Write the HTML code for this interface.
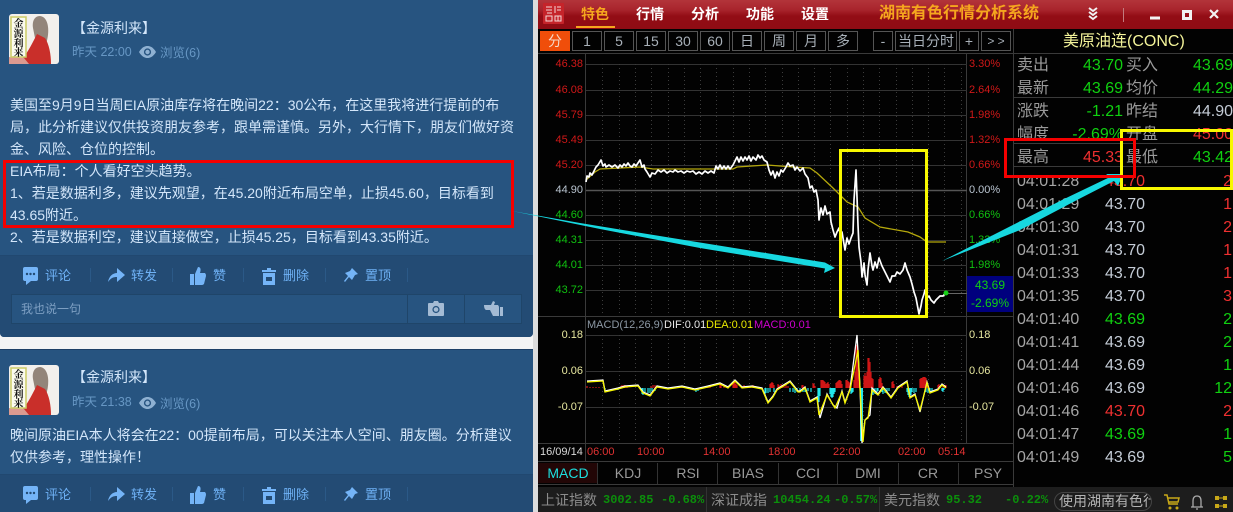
<!DOCTYPE html>
<html><head><meta charset="utf-8"><style>
html,body{margin:0;padding:0;background:#fff}
#r{position:relative;width:1233px;height:512px;overflow:hidden;background:#f4f4f4;font-family:"Liberation Sans","Noto Sans CJK SC",sans-serif}
#r div,#r span.a{position:absolute;white-space:nowrap}
.t{color:#d3e6fa;font-size:14px;line-height:22px;left:10px}
.n{color:#d3e6fa;font-size:14px;line-height:20px;left:72px}
.m{color:#6797c4;font-size:12.500px;line-height:18px}
.ac{color:#6fb2f6;font-size:13px;line-height:20px}
.dv{width:1px;height:14px;background:#2b5987}
.b{box-sizing:border-box;border:1px solid #555;height:20px;top:31px;color:#a8b0b8;font-size:14px;line-height:18px;text-align:center}
.pl{left:538px;width:45px;text-align:right;font-size:11px;line-height:14px}
.pr{left:969px;font-size:11px;line-height:14px}
.mn{color:#fff;font-size:14px;font-weight:bold;line-height:20px;top:4px}
.l{left:1017px;color:#9a9a9a;font-size:16px;line-height:22px}
.l2{left:1126px;color:#9a9a9a;font-size:16px;line-height:22px}
.v{left:1053px;width:70px;text-align:right;font-size:16px;line-height:22px}
.v2{left:1163px;width:70px;text-align:right;font-size:16px;line-height:22px}
.tt{left:1017px;color:#a5a5a5;font-size:16px;line-height:22px}
.tp{left:1105px;font-size:16px;line-height:22px}
.tq{left:1183px;width:49px;text-align:right;font-size:16px;line-height:22px}
.tab{top:463px;height:20px;width:60px;text-align:center;color:#999;font-size:14px;line-height:20px}
.tm{top:441px;color:#e23232;font-size:11px;line-height:22px}
.bl{top:490px;color:#8c8c8c;font-size:14px;line-height:20px}
.bg{top:491px;color:#0b8f0b;font:bold 12px/18px "Liberation Mono",monospace}
.g{color:#10d010}.rd{color:#ef3030}.w{color:#c4ccd6}
</style></head><body><div id="r">

<!-- left cards -->
<div style="left:0;top:0;width:533px;height:337px;background:#275480;border-radius:0 0 4px 4px"></div>
<div style="left:0;top:255px;width:533px;height:82px;background:#234b74;border-top:1px solid #214870;box-sizing:border-box;border-radius:0 0 4px 4px"></div>
<div style="left:0;top:349px;width:533px;height:163px;background:#275480;border-top:1px solid #1e4066;box-sizing:border-box"></div>
<div style="left:0;top:474px;width:533px;height:38px;background:#234b74;border-top:1px solid #214870;box-sizing:border-box"></div>

<svg style="position:absolute;left:9px;top:14px" width="50" height="50" viewBox="0 0 50 50"><rect width="50" height="50" rx="3" fill="#f3f0ec"/><path d="M31 2C25 2 23 8 24 14L26 24 37 30C41 18 40 3 31 2Z" fill="#93857a"/><path d="M28 20C24 28 19 38 14 44L0 44V50H42C42 40 40 30 36 24Z" fill="#c92f2a"/><path d="M0 43 15 44 20 50H0Z" fill="#dc9a90"/><rect x="2" y="3" width="15" height="40" fill="#fbfbee" stroke="#cccc66" stroke-width="1.500"/><text x="9.500" y="13" text-anchor="middle" font-size="10" font-weight="bold" fill="#111" font-family="'Noto Serif CJK SC',serif">金</text><text x="9.500" y="23" text-anchor="middle" font-size="10" font-weight="bold" fill="#111" font-family="'Noto Serif CJK SC',serif">源</text><text x="9.500" y="33" text-anchor="middle" font-size="10" font-weight="bold" fill="#111" font-family="'Noto Serif CJK SC',serif">利</text><text x="9.500" y="42" text-anchor="middle" font-size="10" font-weight="bold" fill="#111" font-family="'Noto Serif CJK SC',serif">来</text></svg>
<svg style="position:absolute;left:9px;top:365px" width="50" height="50" viewBox="0 0 50 50"><rect width="50" height="50" rx="3" fill="#f3f0ec"/><path d="M31 2C25 2 23 8 24 14L26 24 37 30C41 18 40 3 31 2Z" fill="#93857a"/><path d="M28 20C24 28 19 38 14 44L0 44V50H42C42 40 40 30 36 24Z" fill="#c92f2a"/><path d="M0 43 15 44 20 50H0Z" fill="#dc9a90"/><rect x="2" y="3" width="15" height="40" fill="#fbfbee" stroke="#cccc66" stroke-width="1.500"/><text x="9.500" y="13" text-anchor="middle" font-size="10" font-weight="bold" fill="#111" font-family="'Noto Serif CJK SC',serif">金</text><text x="9.500" y="23" text-anchor="middle" font-size="10" font-weight="bold" fill="#111" font-family="'Noto Serif CJK SC',serif">源</text><text x="9.500" y="33" text-anchor="middle" font-size="10" font-weight="bold" fill="#111" font-family="'Noto Serif CJK SC',serif">利</text><text x="9.500" y="42" text-anchor="middle" font-size="10" font-weight="bold" fill="#111" font-family="'Noto Serif CJK SC',serif">来</text></svg>

<div class="n" style="top:18px">【金源利来】</div>
<div class="m" style="left:72px;top:43px">昨天 22:00</div>
<svg style="position:absolute;left:139px;top:46px" width="17" height="12" viewBox="0 0 17 12"><path d="M0 6C3 1 6 0 8.500 0S14 1 17 6C14 11 11 12 8.500 12S3 11 0 6Z" fill="#8fb1d2"/><circle cx="8.500" cy="6" r="3.600" fill="#275480"/><circle cx="8.500" cy="6" r="2.200" fill="#8fb1d2"/></svg>
<div class="m" style="left:160px;top:44px">浏览(6)</div>

<div class="n" style="top:367px">【金源利来】</div>
<div class="m" style="left:72px;top:393px">昨天 21:38</div>
<svg style="position:absolute;left:139px;top:397px" width="17" height="12" viewBox="0 0 17 12"><path d="M0 6C3 1 6 0 8.500 0S14 1 17 6C14 11 11 12 8.500 12S3 11 0 6Z" fill="#8fb1d2"/><circle cx="8.500" cy="6" r="3.600" fill="#275480"/><circle cx="8.500" cy="6" r="2.200" fill="#8fb1d2"/></svg>
<div class="m" style="left:160px;top:395px">浏览(6)</div>

<div class="t" style="top:94px">美国至9月9日当周EIA原油库存将在晚间22：30公布，在这里我将进行提前的布</div>
<div class="t" style="top:116px">局，此分析建议仅供投资朋友参考，跟单需谨慎。另外，大行情下，朋友们做好资</div>
<div class="t" style="top:138px">金、风险、仓位的控制。</div>
<div class="t" style="top:160px">EIA布局：个人看好空头趋势。</div>
<div class="t" style="top:182px">1、若是数据利多，建议先观望，在45.20附近布局空单，止损45.60，目标看到</div>
<div class="t" style="top:204px">43.65附近。</div>
<div class="t" style="top:226px">2、若是数据利空，建议直接做空，止损45.25，目标看到43.35附近。</div>
<div class="t" style="top:424px">晚间原油EIA本人将会在22：00提前布局，可以关注本人空间、朋友圈。分析建议</div>
<div class="t" style="top:446px">仅供参考，理性操作！</div>

<!-- action rows -->
<svg style="position:absolute;left:0;top:265px" width="420" height="22" viewBox="0 0 420 22" fill="#74b4f7"><path d="M25 2H36Q38 2 38 4V14Q38 16 36 16H31L26 20V16H25Q23 16 23 14V4Q23 2 25 2Z"/><circle cx="27" cy="9" r="1.200" fill="#234b74"/><circle cx="30.500" cy="9" r="1.200" fill="#234b74"/><circle cx="34" cy="9" r="1.200" fill="#234b74"/><path d="M108 17C109 11 113 8 117 8V3L125 10 117 17V12C113 12 111 13 108 17Z"/><path d="M190 9H194V20H190ZM195 9 198 2C201 2 201 5 200 8H205Q206 9 206 11L204 19Q203 20 202 20H195Z"/><path d="M262 5H267V3H271V5H276V7H262ZM263 8H275V20H263ZM266 12V16H272V12Z" fill-rule="evenodd"/><path d="M352 3 358 9 355 10 352 15 349 12 345 17 344 16 348 11 345 8 350 6Z"/></svg>
<div class="ac" style="left:45px;top:266px">评论</div><div class="ac" style="left:131px;top:266px">转发</div><div class="ac" style="left:213px;top:266px">赞</div><div class="ac" style="left:283px;top:266px">删除</div><div class="ac" style="left:365px;top:266px">置顶</div>
<div class="dv" style="left:90px;top:268px"></div><div class="dv" style="left:172px;top:268px"></div><div class="dv" style="left:243px;top:268px"></div><div class="dv" style="left:325px;top:268px"></div><div class="dv" style="left:407px;top:268px"></div>

<svg style="position:absolute;left:0;top:484px" width="420" height="22" viewBox="0 0 420 22" fill="#74b4f7"><path d="M25 2H36Q38 2 38 4V14Q38 16 36 16H31L26 20V16H25Q23 16 23 14V4Q23 2 25 2Z"/><circle cx="27" cy="9" r="1.200" fill="#234b74"/><circle cx="30.500" cy="9" r="1.200" fill="#234b74"/><circle cx="34" cy="9" r="1.200" fill="#234b74"/><path d="M108 17C109 11 113 8 117 8V3L125 10 117 17V12C113 12 111 13 108 17Z"/><path d="M190 9H194V20H190ZM195 9 198 2C201 2 201 5 200 8H205Q206 9 206 11L204 19Q203 20 202 20H195Z"/><path d="M262 5H267V3H271V5H276V7H262ZM263 8H275V20H263ZM266 12V16H272V12Z" fill-rule="evenodd"/><path d="M352 3 358 9 355 10 352 15 349 12 345 17 344 16 348 11 345 8 350 6Z"/></svg>
<div class="ac" style="left:45px;top:485px">评论</div><div class="ac" style="left:131px;top:485px">转发</div><div class="ac" style="left:213px;top:485px">赞</div><div class="ac" style="left:283px;top:485px">删除</div><div class="ac" style="left:365px;top:485px">置顶</div>
<div class="dv" style="left:90px;top:487px"></div><div class="dv" style="left:172px;top:487px"></div><div class="dv" style="left:243px;top:487px"></div><div class="dv" style="left:325px;top:487px"></div><div class="dv" style="left:407px;top:487px"></div>

<!-- input -->
<div style="left:11px;top:294px;width:511px;height:30px;box-sizing:border-box;background:#275480;border:1px solid #1f4569"></div>
<div style="left:407px;top:294px;width:1px;height:30px;background:#1f4569"></div>
<div style="left:464px;top:294px;width:1px;height:30px;background:#1f4569"></div>
<div style="left:21px;top:299px;color:#7d9fc2;font-size:12px;line-height:20px">我也说一句</div>
<svg style="position:absolute;left:428px;top:301px" width="16" height="15" viewBox="0 0 16 15"><path d="M1 2H5L6 0H10L11 2H15Q16 2 16 3V14Q16 15 15 15H1Q0 15 0 14V3Q0 2 1 2Z" fill="#a4bbd4"/><circle cx="8" cy="8.500" r="3.600" fill="#275480"/><circle cx="8" cy="8.500" r="2.300" fill="#a4bbd4"/></svg>
<svg style="position:absolute;left:484px;top:301px" width="19" height="15" viewBox="0 0 19 15" fill="#a4bbd4"><path d="M0 4H7L9 0 11 1 10 4H14Q15 5 15 7V15H9L6 9H2Q0 8 0 4Z"/><rect x="16" y="6" width="3" height="9"/></svg>

<!-- red note box -->
<div style="left:3px;top:160px;width:511px;height:68px;box-sizing:border-box;border:3px solid #f50000"></div>

<!-- terminal -->
<div style="left:533px;top:0;width:5px;height:512px;background:#dcdcdc"></div>
<div style="left:538px;top:0;width:695px;height:512px;background:#020202"></div>
<div style="left:538px;top:0;width:695px;height:29px;background:linear-gradient(#b3343a 0,#a8242c 10px,#930d15 16px,#8f0c14 100%)"></div>
<svg style="position:absolute;left:543px;top:3px" width="21" height="21"><rect width="21" height="21" rx="1" fill="#c5242a"/><g stroke="#f4d6d6" fill="none"><path d="M3 4H9M3 7H9M4 10H9M12 3V10M14 4H18M14 7H18M3 13H9V18H3ZM12 13H18V18H12ZM15 13V18"/></g></svg>
<div class="mn" style="left:581px;color:#f5a61e">特色</div>
<div style="left:576px;top:26px;width:39px;height:2px;background:#f5a61e"></div>
<div class="mn" style="left:636px">行情</div><div class="mn" style="left:691px">分析</div><div class="mn" style="left:746px">功能</div><div class="mn" style="left:801px">设置</div>
<div style="left:879px;top:2px;color:#f5a61e;font-size:16px;font-weight:bold;line-height:24px">湖南有色行情分析系统</div>
<svg style="position:absolute;left:1085px;top:6px" width="148" height="16" viewBox="0 0 148 16" fill="none" stroke="#f2f2f2" stroke-width="2"><path d="M4 2 8 5 12 2M4 6 8 9 12 6M4 10 8 13 12 10"/><path d="M38.500 2V16" stroke="#c27a7e" stroke-width="1"/><path d="M65 12H75" stroke-width="3"/><rect x="98.500" y="5.500" width="7" height="7" stroke-width="3"/><path d="M125 4 133 12M133 4 125 12" stroke-width="2.200"/></svg>

<!-- toolbar -->
<div class="b" style="left:540px;width:30px;background:#f04e0a;border-color:#f04e0a;color:#f5d8c8">分</div>
<div class="b" style="left:572px;width:30px">1</div><div class="b" style="left:604px;width:30px">5</div><div class="b" style="left:636px;width:30px">15</div><div class="b" style="left:668px;width:30px">30</div><div class="b" style="left:700px;width:30px">60</div><div class="b" style="left:732px;width:30px">日</div><div class="b" style="left:764px;width:30px">周</div><div class="b" style="left:796px;width:30px">月</div><div class="b" style="left:828px;width:30px">多</div>
<div class="b" style="left:873px;width:20px">-</div><div class="b" style="left:895px;width:62px">当日分时</div><div class="b" style="left:959px;width:20px">+</div><div class="b" style="left:981px;width:30px;font-size:12px">&gt; &gt;</div>

<!-- chart svg -->
<svg style="position:absolute;left:0;top:0" width="1233" height="512" viewBox="0 0 1233 512" fill="none">
<path d="M538 53.500H1233M538 316.500H1013M538 443.500H1013M538 461.500H1013M538 484.500H1013M585.500 53V461M966.500 53V443M1013.500 29V487" stroke="#3a3a3a"/>
<path d="M586 64.500H967M586 90.500H967M586 115.500H967M586 140.500H967M586 165.500H967M586 215.500H967M586 240.500H967M586 265.500H967M586 290.500H967M586 335.500H967M586 371.500H967M586 407.500H967" stroke="#333"/>
<path d="M586 190.500H967" stroke="#555" stroke-width="1.500"/>
<path d="M602.500 64V315M619.500 64V315M635.500 64V315M651.500 64V315M668.500 64V315M684.500 64V315M700.500 64V315M716.500 64V315M733.500 64V315M749.500 64V315M765.500 64V315M782.500 64V315M798.500 64V315M814.500 64V315M830.500 64V315M847.500 64V315M863.500 64V315M879.500 64V315M896.500 64V315M912.500 64V315M928.500 64V315M944.500 64V315M961.500 64V315M602.500 335V443M619.500 335V443M635.500 335V443M651.500 335V443M668.500 335V443M684.500 335V443M700.500 335V443M716.500 335V443M733.500 335V443M749.500 335V443M765.500 335V443M782.500 335V443M798.500 335V443M814.500 335V443M830.500 335V443M847.500 335V443M863.500 335V443M879.500 335V443M896.500 335V443M912.500 335V443M928.500 335V443M944.500 335V443M961.500 335V443" stroke="#3c3c3c" stroke-dasharray="1 3"/>
<polyline points="586,180 595,172 600,169 640,167 653,169 733,169 737,167 767,165 793,167 810,168 817,173 833,188 847,202 858,207 865,218 880,227 908,232 920,237 927,242 946,242" stroke="#b5a80c" stroke-width="1.300"/>
<polyline stroke="#fff" stroke-width="1.700" stroke-linejoin="round" points="586,182 587,176 589,177 590,173 592,175 594,171 596,167 598,165 601,160 603,166 605,164 606,167 609,165 612,167 615,165 618,168 620,165 622,167 624,164 626,166 628,163 630,166 632,167 634,164 636,166 638,163 640,160 642,167 644,165 645,169 647,172 650,177 652,173 655,174 658,170 661,172 664,170 667,173 670,171 673,172 675,170 678,172 681,171 684,173 687,171 690,172 693,171 696,174 699,172 702,174 705,171 708,173 711,171 714,173 716,166 718,169 720,165 722,169 724,166 726,169 728,166 730,169 733,165 735,161 737,157 739,162 741,157 743,161 745,157 747,160 749,156 751,161 753,157 756,160 758,155 760,158 762,156 764,160 767,162 769,170 771,175 773,171 775,178 777,172 779,176 781,170 783,172 786,167 788,163 790,166 793,165 795,170 797,167 800,171 803,168 805,174 808,178 810,188 812,186 814,192 816,190 818,200 819,220 821,208 823,215 825,206 827,214 830,212 831,222 833,230 835,237 837,232 839,228 841,238 842,232 844,244 845,250 847,238 849,244 851,238 853,233 854,200 856,170 857,197 858,225 859,247 861,262 862,277 864,263 865,275 867,285 868,270 870,253 872,266 873,270 875,262 877,268 879,258 882,266 885,272 888,278 890,282 892,276 895,276 897,272 900,274 903,270 905,263 907,270 910,277 912,284 914,292 916,298 919,314 921,306 922,300 924,294 925,290 927,298 929,296 931,300 934,303 936,300 938,298 940,296 943,296 946,293"/>
<path d="M946 293.500H967" stroke="#666"/>
<circle cx="946" cy="293" r="2.500" fill="#16d016"/>

<!-- macd histogram -->
<path stroke="#d01616" stroke-width="1.200" d="M587 388V386M590 388V387M593 388V387M596 388V387M599 388V387M621 388V386M622 388V385M624 388V385M625 388V385M627 388V386M651 388V386M653 388V385M655 388V385M658 388V386M660 388V386M682 388V386M684 388V386M708 388V386M710 388V386M720 388V384M721 388V384M724 388V386M733 388V383M734 388V382M735 388V382M736 388V384M737 388V385M742 388V386M744 388V385M746 388V386M750 388V386M753 388V385M770 388V384M771 388V383M772 388V382M773 388V383M774 388V385M778 388V384M779 388V385M781 388V384M782 388V385M784 388V386M786 388V385M788 388V386M802 388V385M803 388V385M813 388V383M814 388V384M815 388V386M821 388V380M822 388V380M823 388V380M824 388V381M825 388V382M826 388V384M827 388V383M828 388V382M829 388V384M836 388V383M837 388V382M838 388V381M839 388V380M840 388V380M841 388V381M842 388V384M846 388V380M847 388V380M848 388V381M849 388V382M850 388V383M851 388V384M854 388V380M855 388V372M856 388V345M857 388V345M858 388V350M859 388V373M864 388V376M865 388V373M866 388V376M867 388V372M868 388V358M869 388V358M870 388V362M871 388V372M872 388V378M873 388V379M879 388V379M880 388V377M881 388V378M882 388V383M892 388V382M893 388V381M894 388V384M897 388V386M899 388V386M902 388V386M920 388V379M921 388V378M922 388V378M923 388V377M924 388V377M925 388V377M926 388V378M927 388V383M928 388V385M938 388V385M939 388V384M940 388V386M943 388V386M945 388V385M946 388V385"/>
<path stroke="#22e6ea" stroke-width="1.200" d="M605 388V392M618 388V390M642 388V394M643 388V395M645 388V392M648 388V393M650 388V393M652 388V391M655 388V391M696 388V392M698 388V391M765 388V394M766 388V393M768 388V393M770 388V392M774 388V392M778 388V390M790 388V392M793 388V392M795 388V393M797 388V392M800 388V391M803 388V392M805 388V392M808 388V391M811 388V392M818 388V403M819 388V402M820 388V396M830 388V394M831 388V397M832 388V398M833 388V397M834 388V394M835 388V392M851 388V394M852 388V393M853 388V392M872 388V393M873 388V395M875 388V394M877 388V392M878 388V391M882 388V392M883 388V394M885 388V393M887 388V392M889 388V391M907 388V392M908 388V395M909 388V397M910 388V398M911 388V395M912 388V392M914 388V393M916 388V392M926 388V392M928 388V393M930 388V393M932 388V391M942 388V391M943 388V392M944 388V390"/>
<path stroke="#22e6ea" stroke-width="3" d="M861.500 388V441"/>
<polyline stroke="#fff" stroke-width="1.300" points="587,381 603,380 605,391 618,388 625,386 638,385 643,392 650,395 657,386 668,388 682,386 695,389 708,386 720,383 728,387 735,380 742,387 752,386 762,388 768,402 773,396 777,389 790,381 798,391 800,391 805,387 810,401 817,397 820,418 827,394 833,405 837,408 842,391 845,402 850,389 857,335 860,388 862,443 865,420 870,415 872,388 878,394 883,387 891,397 898,387 907,381 910,397 915,394 920,412 927,382 930,392 938,389 942,384 946,387"/>
<polyline stroke="#f6f600" stroke-width="1.300" points="587,382 603,381 605,392 618,389 625,387 638,386 643,393 650,396 657,387 668,389 682,387 695,390 708,387 720,384 728,388 735,381 742,388 752,387 762,389 768,403 773,397 777,390 790,382 798,392 800,392 805,388 810,402 817,398 819,415 827,395 835,408 842,392 845,403 850,390 858,350 860,388 863,442 865,420 868,418 872,390 878,395 883,388 891,398 898,388 907,382 910,398 915,395 920,410 927,383 930,393 938,390 942,385 946,388"/>

<!-- right panel lines -->
<path d="M1014 97.500H1233M1014 143.500H1233M1014 166.500H1233" stroke="#3a3a3a"/>
</svg>

<!-- axis -->
<div class="pl" style="top:57px;color:#d01818">46.38</div><div class="pr" style="top:57px;color:#d01818">3.30%</div>
<div class="pl" style="top:83px;color:#d01818">46.08</div><div class="pr" style="top:83px;color:#d01818">2.64%</div>
<div class="pl" style="top:108px;color:#d01818">45.79</div><div class="pr" style="top:108px;color:#d01818">1.98%</div>
<div class="pl" style="top:133px;color:#d01818">45.49</div><div class="pr" style="top:133px;color:#d01818">1.32%</div>
<div class="pl" style="top:158px;color:#d01818">45.20</div><div class="pr" style="top:158px;color:#d01818">0.66%</div>
<div class="pl" style="top:183px;color:#b9c4d0">44.90</div><div class="pr" style="top:183px;color:#b9c4d0">0.00%</div>
<div class="pl" style="top:208px;color:#10c010">44.60</div><div class="pr" style="top:208px;color:#10c010">0.66%</div>
<div class="pl" style="top:233px;color:#10c010">44.31</div><div class="pr" style="top:233px;color:#10c010">1.32%</div>
<div class="pl" style="top:258px;color:#10c010">44.01</div><div class="pr" style="top:258px;color:#10c010">1.98%</div>
<div class="pl" style="top:283px;color:#10c010">43.72</div>
<div style="left:967px;top:276px;width:46px;height:18px;background:#00007e;color:#10d010;font-size:12px;line-height:18px;text-align:center">43.69</div>
<div style="left:967px;top:294px;width:46px;height:18px;background:#00007e;color:#10d010;font-size:12px;line-height:18px;text-align:center">-2.69%</div>

<div style="left:587px;top:318px;font-size:11px;line-height:14px;color:#8c98a4">MACD(12,26,9)</div>
<div style="left:664px;top:318px;font-size:11px;line-height:14px;color:#e8e8e8">DIF:0.01</div>
<div style="left:706px;top:318px;font-size:11px;line-height:14px;color:#e8e800">DEA:0.01</div>
<div style="left:754px;top:318px;font-size:11px;line-height:14px;color:#d000d0">MACD:0.01</div>
<div class="pl" style="top:328px;color:#e8e8a0">0.18</div><div class="pr" style="top:328px;color:#e8e8a0">0.18</div>
<div class="pl" style="top:364px;color:#e8e8a0">0.06</div><div class="pr" style="top:364px;color:#e8e8a0">0.06</div>
<div class="pl" style="top:400px;color:#e8e8a0">-0.07</div><div class="pr" style="top:400px;color:#e8e8a0">-0.07</div>

<div style="left:540px;top:441px;color:#d8d8d8;font-size:11px;line-height:22px">16/09/14</div>
<div class="tm" style="left:587px">06:00</div><div class="tm" style="left:637px">10:00</div><div class="tm" style="left:703px">14:00</div><div class="tm" style="left:768px">18:00</div><div class="tm" style="left:833px">22:00</div><div class="tm" style="left:898px">02:00</div><div class="tm" style="left:938px">05:14</div>

<div class="tab" style="left:538px;background:#220606;color:#1ddede">MACD</div>
<div class="tab" style="left:598px">KDJ</div><div class="tab" style="left:658px">RSI</div><div class="tab" style="left:718px">BIAS</div><div class="tab" style="left:778px">CCI</div><div class="tab" style="left:838px">DMI</div><div class="tab" style="left:898px">CR</div><div class="tab" style="left:958px">PSY</div>
<div style="left:597px;top:463px;width:1px;height:21px;background:#333"></div><div style="left:657px;top:463px;width:1px;height:21px;background:#333"></div><div style="left:717px;top:463px;width:1px;height:21px;background:#333"></div><div style="left:778px;top:463px;width:1px;height:21px;background:#333"></div><div style="left:837px;top:463px;width:1px;height:21px;background:#333"></div><div style="left:898px;top:463px;width:1px;height:21px;background:#333"></div><div style="left:958px;top:463px;width:1px;height:21px;background:#333"></div>

<!-- quote panel -->
<div style="left:1063px;top:31px;color:#f4f49a;font-size:16px;line-height:22px">美原油连(CONC)</div>
<div class="l" style="top:55px">卖出</div><div class="v g" style="top:55px">43.70</div><div class="l2" style="top:55px">买入</div><div class="v2 g" style="top:55px">43.69</div>
<div class="l" style="top:78px">最新</div><div class="v g" style="top:78px">43.69</div><div class="l2" style="top:78px">均价</div><div class="v2 g" style="top:78px">44.29</div>
<div class="l" style="top:101px">涨跌</div><div class="v g" style="top:101px">-1.21</div><div class="l2" style="top:101px">昨结</div><div class="v2 w" style="top:101px">44.90</div>
<div class="l" style="top:124px">幅度</div><div class="v g" style="top:124px">-2.69%</div><div class="l2" style="top:124px">开盘</div><div class="v2 rd" style="top:124px">45.00</div>
<div style="left:1014px;top:140px;width:219px;height:26px;background:#020202"></div>
<div style="left:1014px;top:143px;width:219px;height:1px;background:#3a3a3a"></div>
<div style="left:1014px;top:166px;width:219px;height:1px;background:#3a3a3a"></div>
<div class="l" style="top:147px">最高</div><div class="v rd" style="top:147px">45.33</div><div class="l2" style="top:147px">最低</div><div class="v2 g" style="top:147px">43.42</div>

<div class="tt" style="top:171px">04:01:28</div><div class="tp rd" style="top:171px">43.70</div><div class="tq rd" style="top:171px">2</div>
<div class="tt" style="top:194px">04:01:29</div><div class="tp w" style="top:194px">43.70</div><div class="tq rd" style="top:194px">1</div>
<div class="tt" style="top:217px">04:01:30</div><div class="tp w" style="top:217px">43.70</div><div class="tq rd" style="top:217px">2</div>
<div class="tt" style="top:240px">04:01:31</div><div class="tp w" style="top:240px">43.70</div><div class="tq rd" style="top:240px">1</div>
<div class="tt" style="top:263px">04:01:33</div><div class="tp w" style="top:263px">43.70</div><div class="tq rd" style="top:263px">1</div>
<div class="tt" style="top:286px">04:01:35</div><div class="tp w" style="top:286px">43.70</div><div class="tq rd" style="top:286px">3</div>
<div class="tt" style="top:309px">04:01:40</div><div class="tp g" style="top:309px">43.69</div><div class="tq g" style="top:309px">2</div>
<div class="tt" style="top:332px">04:01:41</div><div class="tp w" style="top:332px">43.69</div><div class="tq g" style="top:332px">2</div>
<div class="tt" style="top:355px">04:01:44</div><div class="tp w" style="top:355px">43.69</div><div class="tq g" style="top:355px">1</div>
<div class="tt" style="top:378px">04:01:46</div><div class="tp w" style="top:378px">43.69</div><div class="tq g" style="top:378px">12</div>
<div class="tt" style="top:401px">04:01:46</div><div class="tp rd" style="top:401px">43.70</div><div class="tq rd" style="top:401px">2</div>
<div class="tt" style="top:424px">04:01:47</div><div class="tp g" style="top:424px">43.69</div><div class="tq g" style="top:424px">1</div>
<div class="tt" style="top:447px">04:01:49</div><div class="tp w" style="top:447px">43.69</div><div class="tq g" style="top:447px">5</div>

<!-- status bar -->
<div style="left:538px;top:487px;width:695px;height:25px;background:#1d1d1d"></div>
<div style="left:706px;top:487px;width:1px;height:25px;background:#333"></div><div style="left:879px;top:487px;width:1px;height:25px;background:#333"></div>
<div class="bl" style="left:541px">上证指数</div><div class="bg" style="left:603px">3002.85</div><div class="bg" style="left:661px">-0.68%</div>
<div class="bl" style="left:711px">深证成指</div><div class="bg" style="left:773px">10454.24</div><div class="bg" style="left:834px">-0.57%</div>
<div class="bl" style="left:884px">美元指数</div><div class="bg" style="left:946px">95.32</div><div class="bg" style="left:1005px">-0.22%</div>
<div style="left:1054px;top:492px;width:98px;height:19px;box-sizing:border-box;border:1px solid #444;border-radius:10px;color:#b4b4b4;font-size:14px;line-height:17px;overflow:hidden;text-indent:4px">使用湖南有色行</div>
<svg style="position:absolute;left:1163px;top:494px" width="68" height="16" viewBox="0 0 68 16" fill="none"><path d="M1 1H4L6 10H15M5 4H16L15 8H6" stroke="#c8a818" stroke-width="1.500"/><circle cx="7" cy="14" r="1.500" fill="#c8a818"/><circle cx="14" cy="14" r="1.500" fill="#c8a818"/><path d="M28 13H40M30 13V7Q30 2 34 2T38 7V13M33 15H35" stroke="#aaa" stroke-width="1.300"/><path d="M52 2H56V6H52ZM60 2H64V6H60ZM52 10H56V14H52ZM60 10H64V14H60Z" fill="#c8a818"/><path d="M56 4H60M56 12H60" stroke="#c8a818"/></svg>

<!-- annotations -->
<svg style="position:absolute;left:0;top:0" width="1233" height="512" viewBox="0 0 1233 512" fill="none">
<polygon fill="#17d8e0" points="512,211 580,223 700,242.500 825,262.500 835,268 824,273 825,268.500 700,248 600,229"/>
<polygon fill="#17d8e0" points="942,261 1062,200 1110,177 1106,174 1123,174 1118,186 1114,181 1077,200 1020,230"/>
<rect x="840.500" y="150.500" width="86" height="166" stroke="#f8f800" stroke-width="3"/>
<rect x="1121.500" y="130.500" width="110" height="58" stroke="#f8f800" stroke-width="3"/>
<rect x="1005.500" y="139.500" width="129" height="37" stroke="#f50000" stroke-width="3"/>
</svg>
</div></body></html>
